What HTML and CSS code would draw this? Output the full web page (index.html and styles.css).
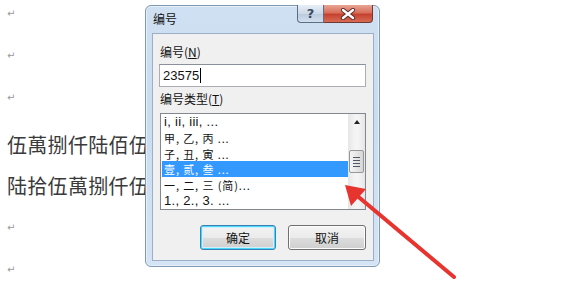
FILE: index.html
```html
<!DOCTYPE html>
<html>
<head>
<meta charset="utf-8">
<link rel="stylesheet" href="styles.css">
</head>
<body>
<div class="doc">
  <div class="row mark">↵</div>
  <div class="row mark">↵</div>
  <div class="row mark">↵</div>
  <div class="row text first">伍萬捌仟陆佰伍</div>
  <div class="row text">陆拾伍萬捌仟伍</div>
  <div class="row mark">↵</div>
  <div class="row mark">↵</div>
</div>

<div class="dialog">
  <div class="titlebar">
    <span class="title">编号</span>
    <div class="capbtns">
      <div class="cap help">?</div>
      <div class="cap close">
        <svg width="16" height="12" viewBox="0 0 16 12"><path d="M3 2 L13 10 M13 2 L3 10" stroke="#5a2a2a" stroke-width="4.2" stroke-linecap="round"/><path d="M3 2 L13 10 M13 2 L3 10" stroke="#fff" stroke-width="2.4" stroke-linecap="round"/></svg>
      </div>
    </div>
  </div>
  <div class="panel">
    <div class="label">编号(<u>N</u>)</div>
    <div class="input">23575<span class="caret"></span></div>
    <div class="label label2">编号类型(<u>T</u>)</div>
    <div class="list">
      <div class="items">
        <div class="item latin">i, ii, iii, ...</div>
        <div class="item han">甲, 乙, 丙 ...</div>
        <div class="item han">子, 丑, 寅 ...</div>
        <div class="item han sel">壹, 贰, 叁 ...</div>
        <div class="item han">一, 二, 三 (简)...</div>
        <div class="item latin">1., 2., 3. ...</div>
      </div>
      <div class="scroll">
        <div class="uparrow"></div>
        <div class="thumb"><i></i><i></i><i></i><i></i></div>
      </div>
    </div>
    <div class="buttons">
      <div class="btn default">确定</div>
      <div class="btn">取消</div>
    </div>
  </div>
</div>

<svg class="arrow" width="575" height="281" viewBox="0 0 575 281">
  <line x1="454" y1="277" x2="355" y2="194" stroke="#e8342f" stroke-width="4" stroke-linecap="round"/>
  <polygon points="345,185 366,189 351,206" fill="#e8342f"/>
</svg>
</body>
</html>
```
FILE: styles.css
```css
html, body {
  margin: 0;
  padding: 0;
  background: #fff;
  width: 575px;
  height: 281px;
  overflow: hidden;
  position: relative;
  font-family: "Noto Sans CJK SC", "Liberation Sans", sans-serif;
}

.doc {
  display: flex;
  flex-direction: column;
  margin-top: -8px;
  padding-left: 7px;
}

.row {
  display: flex;
  align-items: center;
  white-space: nowrap;
}

.mark {
  height: 42px;
  font-size: 10px;
  color: #9a9a9a;
  font-family: "DejaVu Sans", sans-serif;
}

.text {
  height: 41px;
  font-size: 20px;
  color: #3a3a3a;
  letter-spacing: 0.3px;
}

.text.first {
  margin-top: 6px;
}

.dialog {
  position: absolute;
  left: 145px;
  top: 5px;
  width: 235px;
  height: 262px;
  border: 1px solid #7f98b4;
  border-radius: 6px;
  background: linear-gradient(180deg, #cfe0f2 0%, #c9dcf0 40%, #d4e4f5 100%);
  box-shadow: inset 0 0 0 1px #e6f0fa;
  display: flex;
  flex-direction: column;
  padding: 0 5px 5px 6px;
  box-sizing: border-box;
}

.titlebar {
  height: 27px;
  display: flex;
  justify-content: space-between;
  align-items: flex-start;
  flex-shrink: 0;
}

.title {
  font-size: 12px;
  line-height: 16px;
  color: #111;
  margin-top: 5px;
  margin-left: 1px;
}

.capbtns {
  display: flex;
  margin-top: -1px;
  margin-right: 1px;
}

.cap {
  height: 17px;
  border: 1px solid #5d6e85;
  border-top: none;
  display: flex;
  align-items: center;
  justify-content: center;
}

.help {
  width: 25px;
  border-radius: 0 0 0 4px;
  background: linear-gradient(180deg, #e7eef7 0%, #cdd9e8 50%, #b9c9dd 51%, #d3dfee 100%);
  color: #3a4a60;
  font-size: 13px;
  line-height: 15px;
  font-family: "DejaVu Sans", sans-serif;
  font-weight: bold;
}

.close {
  width: 48px;
  border-left: none;
  border-radius: 0 0 4px 0;
  background: linear-gradient(180deg, #e8a493 0%, #d9705c 45%, #c5422f 55%, #d86b55 100%);
  border-color: #6f3a33;
}

.panel {
  flex: 1;
  background: #f0f0f0;
  border: 1px solid #9bb0c8;
  display: flex;
  flex-direction: column;
  padding: 10px 7px 0 6px;
}

.label {
  font-size: 12px;
  line-height: 16px;
  height: 16px;
  color: #111;
  padding-left: 1px;
}

.label u {
  text-decoration: underline;
  text-underline-offset: 1px;
}

.input {
  margin-top: 4px;
  height: 23px;
  box-sizing: border-box;
  border: 1px solid #abadb3;
  border-top-color: #8b8f99;
  background: #fff;
  font-size: 13px;
  line-height: 21px;
  padding-left: 3px;
  color: #111;
  display: flex;
  align-items: center;
  font-family: "Liberation Sans", sans-serif;
}

.caret {
  width: 1px;
  height: 15px;
  background: #000;
  margin-left: 1px;
}

.label2 {
  margin-top: 4px;
}

.list {
  margin-top: 6px;
  margin-left: 1px;
  height: 97px;
  box-sizing: border-box;
  border: 1px solid #828790;
  background: #fff;
  display: flex;
  overflow: hidden;
}

.items {
  flex: 1;
  display: flex;
  flex-direction: column;
  padding-left: 1px;
}

.item {
  height: 16px;
  line-height: 16px;
  color: #111;
  padding-left: 2px;
  white-space: nowrap;
  overflow: hidden;
}

.item.latin {
  font-family: "Liberation Sans", sans-serif;
  font-size: 13px;
  letter-spacing: 0.3px;
}

.item.han {
  font-family: "Noto Sans CJK SC", sans-serif;
  font-size: 11px;
  letter-spacing: 0.9px;
}

.item.sel {
  background: #3399ff;
  color: #fff;
}

.scroll {
  width: 17px;
  background: linear-gradient(90deg, #e6e6e6, #f4f4f4 40%, #f4f4f4 60%, #e6e6e6);
  display: flex;
  flex-direction: column;
  align-items: center;
}

.uparrow {
  margin-top: 6px;
  width: 0;
  height: 0;
  border-left: 3.5px solid transparent;
  border-right: 3.5px solid transparent;
  border-bottom: 4px solid #222;
}

.thumb {
  margin-top: 26px;
  width: 15px;
  height: 23px;
  box-sizing: border-box;
  border: 1px solid #979797;
  border-radius: 2px;
  background: linear-gradient(90deg, #f4f4f4, #e6e6e6 50%, #d6d6d6);
  display: flex;
  flex-direction: column;
  align-items: center;
  justify-content: center;
  gap: 2px;
}

.thumb i {
  display: block;
  width: 7px;
  height: 1px;
  background: #4d5a6a;
}

.buttons {
  margin-top: 15px;
  display: flex;
  justify-content: flex-end;
  gap: 12px;
}

.btn {
  width: 78px;
  height: 25px;
  box-sizing: border-box;
  border: 1px solid #707070;
  border-radius: 3px;
  background: linear-gradient(180deg, #f3f3f3 0%, #ebebeb 50%, #dddddd 51%, #cfcfcf 100%);
  box-shadow: inset 0 0 0 1px #fcfcfc;
  font-size: 12px;
  color: #111;
  display: flex;
  align-items: center;
  justify-content: center;
}

.btn.default {
  width: 76px;
  border-color: #3c7fb1;
  box-shadow: inset 0 0 0 1px #48d8fb, inset 0 0 0 2px #d4effc;
}

.arrow {
  position: absolute;
  left: 0;
  top: 0;
  pointer-events: none;
}
```
